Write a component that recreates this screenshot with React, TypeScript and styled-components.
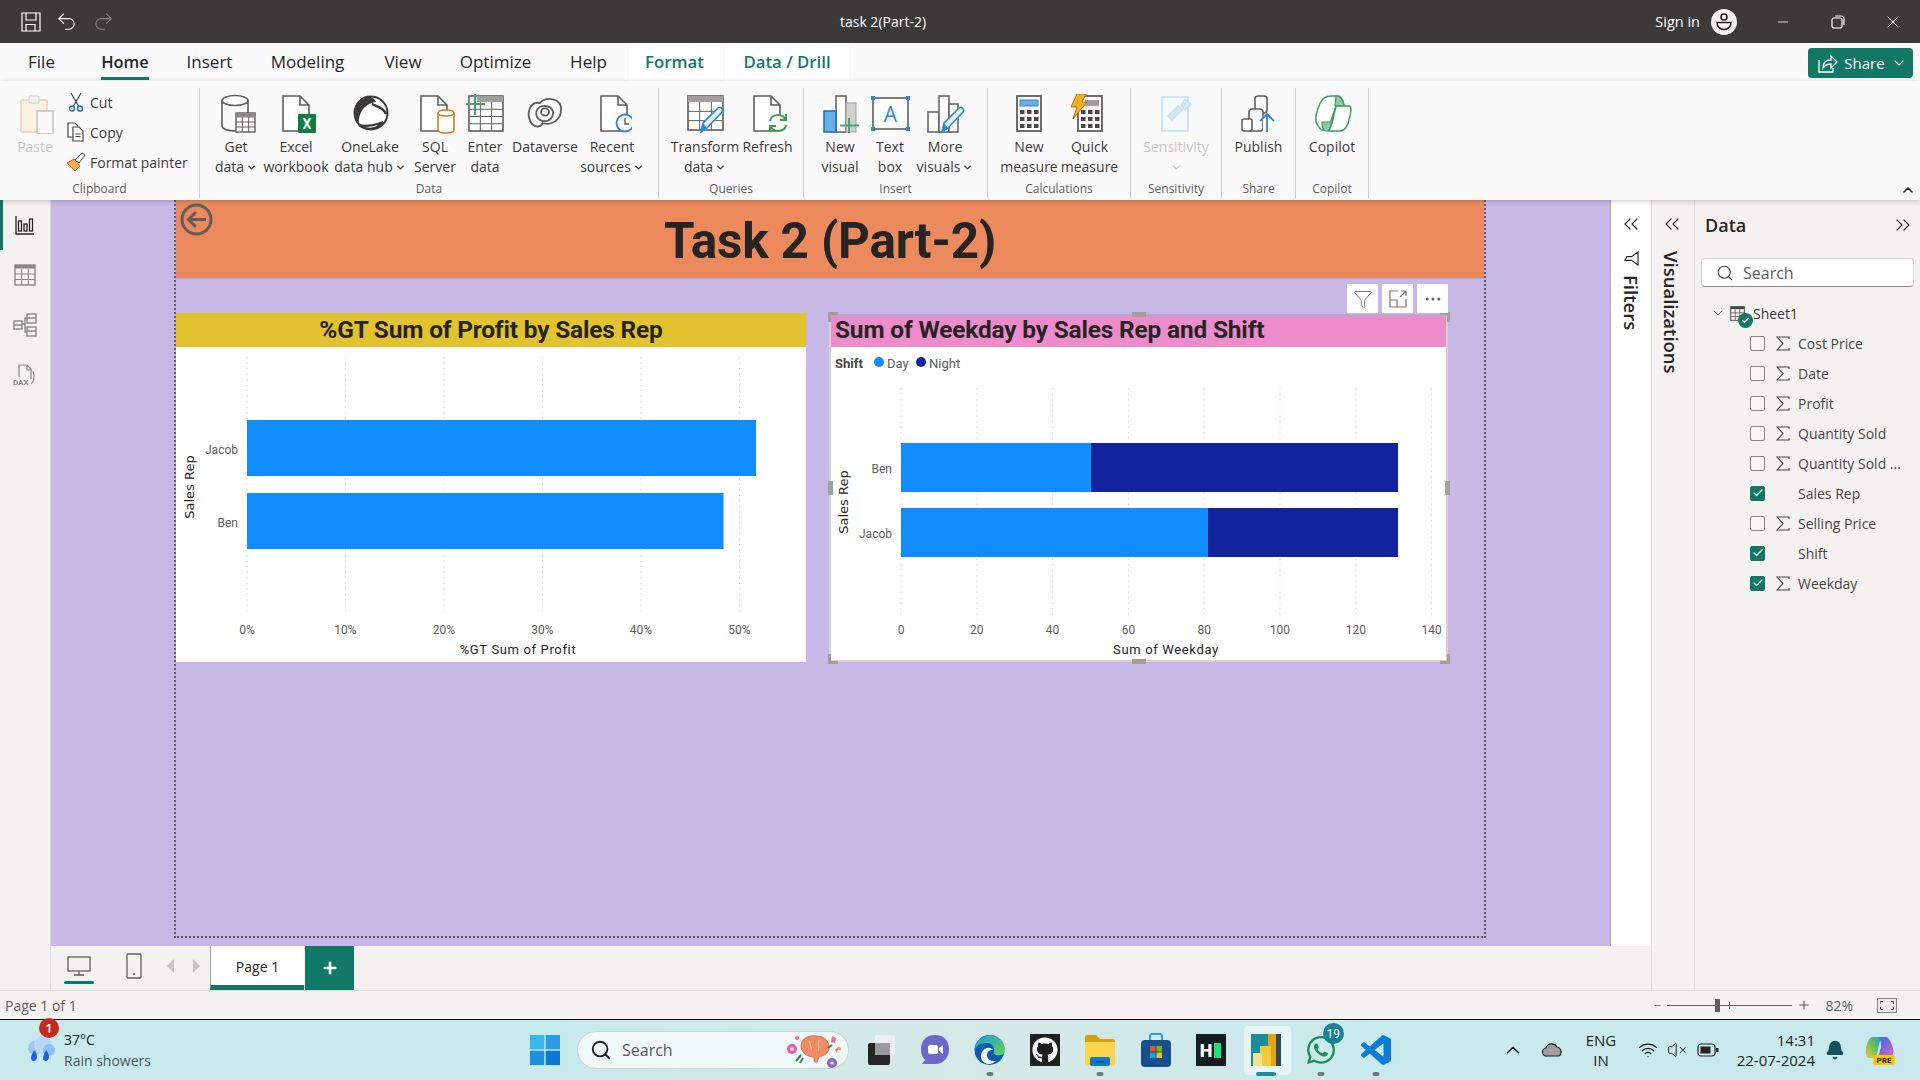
import React from "react";
import styled, { createGlobalStyle } from "styled-components";
import { Search as SearchIcon, Minus, X, Plus, ChevronDown, ChevronUp, ChevronsLeft, ChevronsRight, Check, Undo2, Redo2, Funnel, Ellipsis, Wifi, VolumeX, Bell } from "lucide-react";
import { FaGithub, FaWhatsapp } from "react-icons/fa";

const GlobalStyle = createGlobalStyle`
  html, body { margin: 0; padding: 0; background: #f3f2f1; }
  * { box-sizing: border-box; }
  body { font-family: "Open Sans", "Noto Sans", sans-serif; color: #252423; }
`;

const Shell = styled.div`width: 1920px; height: 1080px; display: flex; flex-direction: column; overflow: hidden;`;

/* Title bar */
const TitleBar = styled.header`height: 43px; background: #3b3a39; display: flex; align-items: center; color: #fff; flex: none;`;
const QuickAccess = styled.div`width: 838px; display: flex; align-items: center; gap: 14px; padding-left: 21px;`;
const DocTitle = styled.div`font-size: 14px; width: 90px; white-space: nowrap; text-align: center;`;
const TitleRight = styled.div`margin-left: auto; display: flex; align-items: center;`;
const SignIn = styled.span`font-size: 14.5px; margin-right: 11px;`;
const Avatar = styled.div`width: 26px; height: 26px; border-radius: 50%; background: #f3f2f1; margin-right: 18px; display: flex; align-items: center; justify-content: center;`;
const WinButton = styled.div`width: 55px; height: 43px; display: flex; align-items: center; justify-content: center;`;

/* Tabs */
const TabRow = styled.nav`height: 38px; background: #fafafa; display: flex; flex: none; position: relative;`;
const Tab = styled.div<{ $w: number; $ctx?: boolean; $active?: boolean }>`
  width: ${(p) => p.$w}px; display: flex; align-items: center; justify-content: center; padding-bottom: 2px;
  font-size: ${(p) => (p.$ctx ? 16.8 : p.$active ? 16.5 : 17)}px;
  color: ${(p) => (p.$ctx ? "#117865" : "#252423")}; font-weight: ${(p) => (p.$ctx || p.$active ? 600 : 400)};
  background: ${(p) => (p.$ctx ? "#fff" : "transparent")}; margin-right: ${(p) => (p.$ctx ? 5 : 0)}px;
`;
const ActiveText = styled.span`position: relative; &::after { content: ""; position: absolute; left: 0; right: 0; bottom: -7px; height: 3px; background: #117865; }`;
const ShareButton = styled.button`
  margin: 5px 7px 3px auto; width: 105px; height: 30px; background: #117865; color: #fff; border: 0; border-radius: 4px; font: 15px "Open Sans", sans-serif;
  display: flex; align-items: center; justify-content: center; gap: 6px; padding: 0 0 0 4px;
`;

/* Ribbon */
const Ribbon = styled.section`height: 119px; background: #fafafa; display: flex; flex: none; padding-top: 7px; position: relative; z-index: 3; box-shadow: 0 1px 5px rgba(0,0,0,.22);`;
const Group = styled.div<{ $w: number; $pad?: number }>`
  width: ${(p) => p.$w}px; height: 110px; border-right: 1px solid #d2d0ce; display: flex; flex-direction: column; padding-left: ${(p) => p.$pad ?? 0}px; flex: none;
`;
const GroupItems = styled.div`height: 95px; display: flex; padding-top: 6px;`;
const GroupLabel = styled.div<{ $pad?: number }>`font-size: 12px; color: #605e5c; text-align: center; line-height: 18px; margin: 2px 0 0 ${(p) => -(p.$pad ?? 0)}px;`;
const BigButton = styled.div<{ $w: number; $off?: boolean }>`
  width: ${(p) => p.$w}px; flex: none; display: flex; flex-direction: column; align-items: center; font-size: 14px; line-height: 20px; white-space: nowrap;
  color: ${(p) => (p.$off ? "#c8c6c4" : "#3b3a39")};
`;
const IconBox = styled.div`width: 40px; height: 40px; margin-bottom: 3px; flex: none;`;
const Line = styled.span`display: flex; align-items: center; justify-content: center; gap: 2px; height: 20px;`;
const SmallStack = styled.div`display: flex; flex-direction: column; margin: -8px 0 0 11px; padding-top: 1px;`;
const SmallRow = styled.div`height: 30px; display: flex; align-items: center; gap: 4px; font-size: 14px; color: #3b3a39; white-space: nowrap;`;
const SmallIcon = styled.span`width: 20px; height: 20px; display: flex; align-items: center; justify-content: center; flex: none;`;
const Collapse = styled.div`position: absolute; right: 4px; bottom: 2px; color: #252423; display: flex;`;

/* Main */
const Main = styled.main`flex: 1; display: flex; min-height: 0;`;
const Sidebar = styled.aside`width: 51px; flex: none; background: #f3f2f1; border-right: 1px solid #e1dfdd; display: flex; flex-direction: column; align-items: center; position: relative;`;
const SideSlot = styled.div`height: 50px; display: flex; align-items: center; justify-content: center; flex: none;`;
const SideMark = styled.div`position: absolute; left: 0; top: 0; width: 3px; height: 50px; background: #117865;`;
const CenterCol = styled.div`width: 1601px; flex: none; display: flex; flex-direction: column; border-right: 1px solid #e1dfdd;`;
const CanvasRow = styled.div`flex: 1; display: flex; min-height: 0;`;
const Canvas = styled.div`width: 1560px; flex: none; background: #c8b8e6; padding-left: 123px; border-right: 1px solid #b3b0ad;`;
const Page = styled.div`width: 1312px; height: 738px; border: 2px dotted #5c5a6c; border-top: 0;`;
const PageHeader = styled.div`height: 78px; background: #ec8a5e; position: relative; display: flex; align-items: center; justify-content: center; box-shadow: 0 1px 1px rgba(0,0,0,.08);`;
const PageTitle = styled.h1`margin: 0; font: 700 49.5px Roboto, sans-serif; color: #252423; letter-spacing: -0.2px; padding-top: 3px;`;
const BackButton = styled.div`position: absolute; left: 4px; top: 3px; width: 33px; height: 33px;`;
const ChartsRow = styled.div`display: flex; align-items: flex-start; padding-top: 35px;`;
const ChartCard = styled.div<{ $w: number; $gap?: number; $top?: number }>`
  width: ${(p) => p.$w}px; flex: none; margin-left: ${(p) => p.$gap ?? 0}px; margin-top: ${(p) => p.$top ?? 0}px; background: #fff; position: relative;
`;
const ChartTitle = styled.div<{ $bg: string; $h: number; $left?: boolean }>`
  height: ${(p) => p.$h}px; background: ${(p) => p.$bg}; font: 700 24.4px Roboto, sans-serif; color: #252423; display: flex; align-items: center;
  justify-content: ${(p) => (p.$left ? "flex-start" : "center")}; padding-left: ${(p) => (p.$left ? 5 : 0)}px; padding-bottom: ${(p) => (p.$left ? 3 : 1)}px; white-space: nowrap; letter-spacing: -0.15px;
`;
const ChartSvg = styled.svg`display: block;`;
const AxisTick = styled.text`font: 12px Roboto, sans-serif; fill: #605e5c;`;
const AxisTitle = styled.text`font: 400 13px Roboto, sans-serif; letter-spacing: .65px; fill: #252423;`;
const SideTitle = styled.text`font: 13px "DejaVu Sans", sans-serif; fill: #252423;`;
const LegendHead = styled.text`font: 700 13px Roboto, sans-serif; fill: #484644;`;
const LegendText = styled.text`font: 13px Roboto, sans-serif; fill: #605e5c;`;
const SelectFrame = styled.div`position: absolute; inset: -1px; border: 2px solid #d4d2d0; border-top-color: #b5a9cf; pointer-events: none;`;
const Handle = styled.div<{ $x: string; $y: string; $w: number; $h: number }>`
  position: absolute; background: #a19f9d; width: ${(p) => p.$w}px; height: ${(p) => p.$h}px;
  ${(p) => p.$x}; ${(p) => p.$y};
`;
const Corner = styled.div<{ $pos: string; $edges: string }>`
  position: absolute; width: 10px; height: 10px; ${(p) => p.$pos}; ${(p) => p.$edges};
`;
const VisualBar = styled.div`position: absolute; right: -1px; top: -31px; display: flex; gap: 4px;`;
const VisualBtn = styled.div`width: 31px; height: 29px; background: #fff; display: flex; align-items: center; justify-content: center; color: #777;`;

/* Right panes */
const FiltersPane = styled.div`width: 40px; flex: none; background: #fff; display: flex; flex-direction: column; align-items: center; padding-top: 12px; color: #252423;`;
const VisPane = styled.div`width: 43px; flex: none; background: #f3f2f1; border-right: 1px solid #e1dfdd; display: flex; flex-direction: column; align-items: center; padding: 12px 3px 0 0; color: #252423;`;
const VerticalLabel = styled.div<{ $top?: number }>`writing-mode: vertical-rl; font-size: 18.5px; font-weight: 600; white-space: nowrap; margin-top: ${(p) => p.$top ?? 0}px;`;
const FunnelMark = styled.svg`margin: 15px 0 9px; transform: rotate(90deg);`;
const DataPane = styled.div`flex: 1; background: #f3f2f1; padding: 13px 0 0 6px; position: relative;`;
const DataHead = styled.div`display: flex; justify-content: space-between; align-items: center; padding: 0 5px 0 4px; height: 24px; font-size: 18px; font-weight: 600; color: #252423;`;
const SearchBox = styled.div`margin-top: 21px; width: 213px; height: 29px; background: #fff; border: 1px solid #d6d4d2; border-bottom-color: #8a8886; border-radius: 4px; display: flex; align-items: center; gap: 9px; padding-left: 14px; font-size: 16px; color: #605e5c;`;
const TreeHead = styled.div`margin: 12px 0 1px; height: 28px; display: flex; align-items: center; padding-left: 9px; font-size: 14px; color: #3b3a39; position: relative;`;
const TreeIcon = styled.span`margin: 0 8px 0 4px; display: flex;`;
const SheetBadge = styled.div`position: absolute; left: 37px; top: 14px; width: 15px; height: 15px; border-radius: 50%; background: #117865; display: flex; align-items: center; justify-content: center; color: #fff;`;
const FieldRow = styled.div`height: 30px; display: flex; align-items: center; padding-left: 49px; font-size: 14px; color: #484644; white-space: nowrap;`;
const Box = styled.div<{ $on?: boolean }>`
  width: 15px; height: 15px; border-radius: 2px; flex: none; border: 1px solid ${(p) => (p.$on ? "#117865" : "#8a8886")};
  background: ${(p) => (p.$on ? "#117865" : "#f7f6f5")}; color: #fff; display: flex; align-items: center; justify-content: center;
`;
const SigmaSlot = styled.span`width: 33px; flex: none; padding-left: 11px; display: flex; align-items: center;`;

/* Page tabs */
const PageBar = styled.div`height: 44px; flex: none; background: #f3f2f1; display: flex; align-items: stretch; position: relative;`;
const ViewBtn = styled.div<{ $w: number; $sel?: boolean }>`
  width: ${(p) => p.$w}px; flex: none; display: flex; align-items: center; justify-content: center; position: relative; padding-bottom: 4px;
  ${(p) => p.$sel && `&::after { content: ""; position: absolute; left: 13px; right: 12px; bottom: 6px; height: 3px; border-radius: 2px; background: #117865; }`}
`;
const PageTab = styled.div`width: 94px; background: #fff; border-left: 1px solid #a19f9d; border-bottom: 5px solid #117865; display: flex; align-items: center; justify-content: center; font-size: 14px; font-weight: 500; color: #252423; padding-top: 2px;`;
const AddPage = styled.div`width: 49px; margin-left: 1px; background: #117865; color: #fff; display: flex; align-items: center; justify-content: center;`;

/* Status */
const StatusBar = styled.div`height: 30px; flex: none; background: #f3f2f1; border-top: 1px solid #e1dfdd; border-bottom: 1px solid #111; display: flex; align-items: center; padding-left: 5px; font-size: 14px; color: #605e5c; position: relative;`;
const ZoomArea = styled.div`margin-left: auto; display: flex; align-items: center; color: #605e5c;`;
const SliderTrack = styled.div`width: 125px; height: 1px; background: #605e5c; position: relative; margin: 0 5px 0 5px;`;
const SliderThumb = styled.div`position: absolute; left: 48px; top: -6px; width: 5px; height: 13px; background: #605e5c;`;
const SliderTick = styled.div`position: absolute; left: 62px; top: -3px; width: 1px; height: 7px; background: #605e5c;`;
const ZoomPct = styled.span`margin: 0 24px 0 14px; font-size: 14px;`;
const FitBtn = styled.div`width: 20px; height: 15px; border: 1px solid #8a8886; margin-right: 23px; display: flex; align-items: center; justify-content: center; background: #ecebea;`;

/* Taskbar */
const Taskbar = styled.footer`height: 60px; flex: none; background: linear-gradient(90deg, #c8eaed 0%, #c8eaed 28%, #d6e8e8 50%, #c8eaed 72%); display: flex; align-items: center; position: relative;`;
const Weather = styled.div`width: 530px; flex: none; display: flex; align-items: center; padding-left: 24px; position: relative;`;
const WeatherBadge = styled.div`position: absolute; left: 39px; top: -11px; width: 20px; height: 20px; border-radius: 50%; background: #c42b1c; color: #fff; font-size: 13px; font-weight: 600; display: flex; align-items: center; justify-content: center;`;
const WeatherText = styled.div`margin-left: 8px; font-size: 14px; line-height: 21px; color: #1f1f1f;`;
const WeatherSub = styled.div`color: #4b5a5c;`;
const TaskSearch = styled.div`margin-left: 17px; width: 272px; height: 38px; border-radius: 19px; background: #f1f8f8; border: 1px solid #c3d4d4; display: flex; align-items: center; padding-left: 12px; gap: 10px; font-size: 16px; color: #5a5a5a; position: relative;`;
const Doodle = styled.div`position: absolute; right: 6px; top: 1px;`;
const TaskIcons = styled.div`display: flex; margin-left: 3px;`;
const TaskSlot = styled.div<{ $active?: boolean }>`
  width: 55.2px; height: 60px; display: flex; align-items: center; justify-content: center; position: relative; flex: none;
  ${(p) => p.$active && `&::before { content: ""; position: absolute; left: 6px; right: 3px; top: 6px; bottom: 5px; background: rgba(255,255,255,.5); border-radius: 4px; }`}
  > svg { position: relative; }
`;
const GithubOverlay = styled.span`position: absolute; display: flex;`;
const RunDot = styled.div<{ $wide?: boolean }>`position: absolute; bottom: 4px; left: 50%; transform: translateX(-50%); width: ${(p) => (p.$wide ? 20 : 7)}px; height: 4px; border-radius: 2px; background: ${(p) => (p.$wide ? "#1c8ca0" : "#6f7a7a")};`;
const WaBadge = styled.div`position: absolute; right: 5px; top: 3px; width: 21px; height: 21px; border-radius: 50%; background: #178294; color: #fff; font: 12px Roboto, sans-serif; display: flex; align-items: center; justify-content: center;`;
const Tray = styled.div`margin-left: auto; display: flex; align-items: center; height: 100%; color: #1f1f1f; position: relative;`;
const TrayBox = styled.div<{ $w: number }>`width: ${(p) => p.$w}px; display: flex; align-items: center; justify-content: center; flex: none;`;
const LangBlock = styled.div`font-size: 15px; line-height: 20px; text-align: center;`;
const Clock = styled.div`width: 95px; text-align: right; font-size: 15px; line-height: 20px; white-space: nowrap;`;
const TrayEnd = styled.span`width: 16px;`;

const chev = <ChevronDown size={11} strokeWidth={3} />;

const G = "#605e5c";
const Doc = ({ x = 8, w = 26, stroke = G }: { x?: number; w?: number; stroke?: string }) => (
  <path d={`M${x} 2H${x + w - 9}L${x + w} 11V37H${x}Z M${x + w - 9} 2V11H${x + w}`} fill="#fff" stroke={stroke} strokeWidth="1.6" />
);
const Svg = ({ children }: { children: React.ReactNode }) => (
  <svg width="40" height="40" viewBox="0 0 40 40" fill="none">{children}</svg>
);
const Cells = ({ x, y, w, h, nx, ny, stroke = G }: { x: number; y: number; w: number; h: number; nx: number; ny: number; stroke?: string }) => (
  <g stroke={stroke} strokeWidth="1">
    {Array.from({ length: nx - 1 }, (_, i) => <line key={`a${i}`} x1={x + (w * (i + 1)) / nx} x2={x + (w * (i + 1)) / nx} y1={y} y2={y + h} />)}
    {Array.from({ length: ny - 1 }, (_, i) => <line key={`b${i}`} y1={y + (h * (i + 1)) / ny} y2={y + (h * (i + 1)) / ny} x1={x} x2={x + w} />)}
  </g>
);
const Pencil = ({ dx = 0, dy = 0 }: { dx?: number; dy?: number }) => (
  <g transform={`translate(${dx} ${dy})`}>
    <path d="M16 37l2-9L33 13c2-2 6 1 4 4L22 33z" fill="#e3effa" stroke="#2b88d8" strokeWidth="1.6" />
    <path d="M16 37l2-9 4 5z" fill="#2b88d8" />
  </g>
);
const IconGetData = () => <Svg><ellipse cx="19" cy="6.5" rx="13" ry="5" stroke={G} strokeWidth="1.6" fill="#fff" /><path d="M6 6.5V32c0 3 6 5 14 5M32 7v12" stroke={G} strokeWidth="1.6" /><rect x="20" y="19" width="19" height="19" fill="#fff" stroke={G} strokeWidth="1.4" /><rect x="20" y="19" width="19" height="4.5" fill="#8a8886" /><Cells x={20} y={23} w={19} h={15} nx={3} ny={3} /></Svg>;
const IconExcel = () => <Svg><Doc x={7} /><rect x="22" y="20" width="18" height="19" rx="1" fill="#107c41" /><text x="31" y="35" textAnchor="middle" fontFamily="Roboto" fontWeight="700" fontSize="14" fill="#fff">X</text></Svg>;
const IconOneLake = () => <Svg><circle cx="21" cy="19" r="16.5" fill="#fff" stroke="#3b3a39" strokeWidth="2" /><path d="M17 2C6 4 1 20 9 31 8 22 12 10 26 8 24 4 21 2 17 2z" fill="#3b3a39" /><path d="M9 31c8 6 17 5 24-3-8 3-18 5-24 3zM22 10c6 3 12 4 14 10" stroke="#3b3a39" strokeWidth="2.4" /></Svg>;
const IconSql = () => <Svg><Doc x={6} /><path d="M23 19c0-4 16-4 16 0v17c0 4-16 4-16 0z" fill="#fff" stroke="#d97a1e" strokeWidth="1.6" /><path d="M23 19c0 4 16 4 16 0" stroke="#d97a1e" strokeWidth="1.6" /></Svg>;
const IconEnter = () => <Svg><rect x="4" y="2" width="34" height="35" fill="#fff" stroke={G} strokeWidth="1.6" /><rect x="12" y="2" width="26" height="6" fill="#a19f9d" /><Cells x={4} y={8} w={34} h={29} nx={3} ny={4} /><path d="M10 0v21M1 10h19" stroke="#4ca26d" strokeWidth="2.2" /></Svg>;
const IconDataverse = () => <Svg><path d="M7 30C0 20 5 7 15 9c5-7 22-5 21 7 0 10-10 16-18 13-3 5-8 4-11 1z" stroke={G} strokeWidth="1.8" /><path d="M12 23C9 16 15 11 20 12c6 0 10 5 7 11-3 5-11 6-15 0z" stroke={G} strokeWidth="1.8" /><ellipse cx="20" cy="18" rx="4" ry="3.6" stroke={G} strokeWidth="1.8" /></Svg>;
const IconRecent = () => <Svg><Doc x={9} /><circle cx="33" cy="29" r="8.5" fill="#fff" stroke="#2b88d8" strokeWidth="1.8" /><path d="M33 24v6h4" stroke={G} strokeWidth="1.4" /></Svg>;
const IconTransform = () => <Svg><rect x="3" y="2" width="35" height="34" fill="#fff" stroke={G} strokeWidth="1.6" /><rect x="3" y="2" width="35" height="6" fill="#a19f9d" /><Cells x={3} y={8} w={35} h={28} nx={3} ny={3} /><Pencil dx={0} dy={1} /></Svg>;
const IconRefresh = () => <Svg><Doc x={6} /><circle cx="30" cy="29" r="9" fill="#fff" /><path d="M22 27c1-7 12-8 15-2M38 31c-1 7-12 8-15 2" stroke="#3c9a5f" strokeWidth="2" /><path d="M38 20v6h-6M22 38v-6h6" stroke="#3c9a5f" strokeWidth="2" /></Svg>;
const IconNewVisual = () => <Svg><rect x="16" y="2" width="10" height="36" fill="#fff" stroke={G} strokeWidth="1.5" /><rect x="26" y="9" width="10" height="29" fill="#d2d0ce" stroke="#a19f9d" /><rect x="4" y="17" width="12" height="21" fill="#69afe5" stroke="#1a6fb5" strokeWidth="1.5" /><path d="M29 24v15M20 31.5h19" stroke="#4ca26d" strokeWidth="2" /></Svg>;
const IconTextBox = () => <Svg><rect x="3" y="4" width="35" height="31" fill="#fff" stroke={G} strokeWidth="1.6" />{[[3, 4], [38, 4], [3, 35], [38, 35]].map(([x, y]) => <rect key={`${x}${y}`} x={x - 2} y={y - 2} width="4" height="4" fill="#2b88d8" />)}<text x="20.5" y="28" textAnchor="middle" fontFamily="Open Sans" fontSize="21" fill="#2b88d8">A</text></Svg>;
const IconMoreVisuals = () => <Svg><rect x="3" y="18" width="11" height="20" fill="#fff" stroke={G} strokeWidth="1.5" /><rect x="14" y="2" width="10" height="36" fill="#fff" stroke={G} strokeWidth="1.5" /><rect x="24" y="10" width="9" height="28" fill="#fff" stroke={G} strokeWidth="1.5" /><Pencil dx={1} dy={1} /></Svg>;
const calcDots = (x: number, y: number) => [0, 1, 2].flatMap((r) => [0, 1, 2].map((c) => <rect key={`${r}${c}`} x={x + c * 7} y={y + r * 7} width="4.5" height="4" fill="#484644" />));
const IconCalc = () => <Svg><rect x="8" y="2" width="24" height="35" fill="#fff" stroke={G} strokeWidth="1.8" /><rect x="11" y="6" width="18" height="6" fill="#69afe5" stroke="#2b88d8" />{calcDots(11, 16)}</Svg>;
const IconQuick = () => <Svg><rect x="8" y="2" width="24" height="35" fill="#fff" stroke={G} strokeWidth="1.8" /><rect x="15" y="6" width="14" height="6" fill="#a19f9d" />{calcDots(11, 16)}<path d="M7 0h9l-4 8h5L3 25l4-12H1z" fill="#f7b01e" stroke="#c9650b" strokeWidth="1" /></Svg>;
const IconSens = () => <Svg><path d="M6 3H32V37H6z" fill="#f3f9fd" stroke="#c3dff2" strokeWidth="1.6" /><path d="M12 22L22 12l4 4-10 10z M25 12l4-7 6 5-6 6z" fill="#d5e8f6" stroke="#c3dff2" strokeWidth="1.4" /></Svg>;
const IconPublish = () => <Svg><rect x="16" y="2" width="12" height="17" rx="3" stroke={G} strokeWidth="1.6" /><rect x="10" y="15" width="14" height="22" rx="3" fill="#fafafa" stroke={G} strokeWidth="1.6" /><rect x="3" y="25" width="10" height="12" rx="2" fill="#fafafa" stroke={G} strokeWidth="1.6" /><rect x="24" y="22" width="10" height="15" fill="#fafafa" /><path d="M28 38V20M21 27l7-7 7 7" stroke="#2b88d8" strokeWidth="1.8" /></Svg>;
const IconCopilot = () => <Svg><path d="M20 2h6c3 0 5 4 6 9l-8 1-8 24H11c-3 0-5-4-6-6C1 24 8 8 11 5c2-2 5-3 9-3z" fill="#fff" stroke="#3c9a5f" strokeWidth="1.5" /><path d="M24 2c4 0 7 4 8 10H23z M10 28h10l-3 9h-3c-3 0-4-5-4-9z" fill="#8fcaa4" stroke="#3c9a5f" strokeWidth="1.2" /><path d="M24 12h13c3 0 2 8 0 14-1 5-4 11-9 11H17l3-8z" fill="#fff" stroke="#3c9a5f" strokeWidth="1.5" /></Svg>;

const PasteIcon = () => (
  <svg width="40" height="40" viewBox="0 0 40 40" fill="none"><rect x="6" y="6" width="26" height="32" rx="1" fill="#fbf2e3" stroke="#f1dcb9" strokeWidth="2" /><rect x="14" y="2" width="10" height="7" rx="1" fill="#f3f2f1" stroke="#d2d0ce" /><rect x="22" y="17" width="16" height="23" fill="#fafafa" stroke="#c8c6c4" strokeWidth="1.6" /></svg>
);
const CutIcon = () => <svg width="16" height="20" viewBox="0 0 16 20" fill="none"><path d="M3 1l7.5 13M13 1L5.5 14" stroke="#3b3a39" strokeWidth="1.2" /><circle cx="4" cy="16.5" r="2.5" stroke="#1a6fb5" strokeWidth="1.4" /><circle cx="12" cy="16.5" r="2.5" stroke="#1a6fb5" strokeWidth="1.4" /></svg>;
const CopyIcon = () => <svg width="18" height="20" viewBox="0 0 18 20" fill="none"><path d="M1 1H8L11 4V15H1Z" fill="#fff" stroke="#484644" strokeWidth="1.2" /><path d="M6 5H12L16 9V19H6Z" fill="#fff" stroke="#484644" strokeWidth="1.2" /><path d="M8.5 12h5M8.5 14.5h5" stroke="#484644" /></svg>;
const BrushIcon = () => <svg width="20" height="20" viewBox="0 0 20 20" fill="none"><path d="M1 11l7-4 6 7-5 5C7 17 5 15 1 11z" fill="#f3b04e" stroke="#c9650b" /><path d="M9 8l7-7 3 2-6 8z" fill="#fff" stroke="#484644" /></svg>;
const SigmaIcon = () => <svg width="14" height="15" viewBox="0 0 14 15" fill="none" stroke="#484644" strokeWidth="1.1"><path d="M13 3V1H1l6 6.5L1 14h12v-2" /></svg>;

const Grid = ({ color = "#8a8886", size = 22 }: { color?: string; size?: number }) => (
  <svg width={size} height={size} viewBox="0 0 22 22" fill="none"><rect x="1" y="1" width="20" height="20" stroke={color} strokeWidth="1.4" /><rect x="1" y="1" width="20" height="3.5" fill={color} /><Cells x={1} y={4.5} w={20} h={16.5} nx={3} ny={3} stroke={color} /></svg>
);

const Bars1 = [
  { name: "Jacob", y: 420, end: 756 },
  { name: "Ben", y: 493, end: 723.5 },
];
const Ticks1 = [0, 10, 20, 30, 40, 50];
const Ticks2 = [0, 20, 40, 60, 80, 100, 120, 140];
const gx1 = (v: number) => 247 + v * 9.85;
const gx2 = (v: number) => 901 + v * 3.79;

const Gridline = ({ x, y1, y2 }: { x: number; y1: number; y2: number }) => (
  <line x1={x} x2={x} y1={y1} y2={y2} stroke="#d6d6d6" strokeDasharray="1.5 4" />
);

const ChartOne = () => (
  <ChartSvg width="630" height="315" viewBox="176 347 630 315">
    {Ticks1.map((t) => <Gridline key={t} x={gx1(t)} y1={357} y2={615} />)}
    {Bars1.map((b) => (
      <g key={b.name}>
        <rect x={247} y={b.y} width={b.end - 247} height={56} fill="#118dff" />
        <AxisTick x={238} y={b.y + 34} textAnchor="end">{b.name}</AxisTick>
      </g>
    ))}
    {Ticks1.map((t) => <AxisTick key={t} x={gx1(t)} y={634} textAnchor="middle">{t}%</AxisTick>)}
    <AxisTitle x={518} y={654} textAnchor="middle">%GT Sum of Profit</AxisTitle>
    <SideTitle transform="translate(194 487) rotate(-90)" textAnchor="middle">Sales Rep</SideTitle>
  </ChartSvg>
);

const ChartTwo = () => (
  <ChartSvg width="617" height="314" viewBox="830 347 617 314">
    <LegendHead x={835} y={368}>Shift</LegendHead>
    <circle cx={879} cy={362} r={5} fill="#118dff" />
    <LegendText x={887} y={368}>Day</LegendText>
    <circle cx={921} cy={362} r={5} fill="#12239e" />
    <LegendText x={929} y={368}>Night</LegendText>
    {Ticks2.map((t) => <Gridline key={t} x={gx2(t)} y1={388} y2={620} />)}
    <rect x={901} y={443} width={190} height={49} fill="#118dff" />
    <rect x={1091} y={443} width={307} height={49} fill="#12239e" />
    <rect x={901} y={508} width={307} height={49} fill="#118dff" />
    <rect x={1208} y={508} width={190} height={49} fill="#12239e" />
    <AxisTick x={892} y={473} textAnchor="end">Ben</AxisTick>
    <AxisTick x={892} y={538} textAnchor="end">Jacob</AxisTick>
    {Ticks2.map((t) => <AxisTick key={t} x={gx2(t)} y={634} textAnchor="middle">{t}</AxisTick>)}
    <AxisTitle x={1166} y={654} textAnchor="middle">Sum of Weekday</AxisTitle>
    <SideTitle transform="translate(848 502) rotate(-90)" textAnchor="middle">Sales Rep</SideTitle>
  </ChartSvg>
);

const fields = [
  { n: "Cost Price", s: true }, { n: "Date", s: true }, { n: "Profit", s: true }, { n: "Quantity Sold", s: true }, { n: "Quantity Sold ...", s: true },
  { n: "Sales Rep", on: true }, { n: "Selling Price", s: true }, { n: "Shift", on: true }, { n: "Weekday", s: true, on: true },
];

const tabs: [string, number, boolean?, boolean?][] = [
  ["File", 83], ["Home", 84, false, true], ["Insert", 85], ["Modeling", 111], ["View", 80], ["Optimize", 105], ["Help", 81],
];

const Big = ({ w, icon, l1, l2, caret, off }: { w: number; icon: React.ReactNode; l1: string; l2?: string; caret?: boolean; off?: boolean }) => (
  <BigButton $w={w} $off={off}>
    <IconBox>{icon}</IconBox>
    <Line>{l1}</Line>
    {(l2 || caret) && <Line>{l2}{caret && chev}</Line>}
  </BigButton>
);

const Flowers = () => (
  <svg width="56" height="36" viewBox="0 0 56 36" fill="none">
    <path d="M15 13c0-8 9-11 15-10 9 0 14 6 13 13-1 5-6 7-10 8l-2 5c-3 1-3-2-3-5-7 0-13-5-13-11z" fill="#f28a64" stroke="#e5734d" />
    <path d="M23 8c2 2 1 7 3 9M33 7c-2 3 1 7-1 11" stroke="#ffc4ad" strokeWidth="1.2" />
    <circle cx="6" cy="16" r="5" fill="#d65bd0" /><circle cx="6" cy="16" r="2" fill="#f7e07a" />
    <circle cx="46" cy="30" r="5" fill="#8a63d9" /><circle cx="46" cy="30" r="1.8" fill="#f7e07a" />
    <path d="M46 3l4 2-1 5-4-1zM52 14l3 1-3 2-1 3-2-3z" fill="#ee6aa0" /><path d="M10 28l5-6M42 15l4-3M14 30l3-5" stroke="#2d8a5a" strokeWidth="2" />
    <circle cx="11" cy="5" r="2" fill="#ee6aa0" /><path d="M52 14l3 3" stroke="#e3b83a" strokeWidth="2" />
  </svg>
);

export default function App() {
  return (
    <Shell>
      <GlobalStyle />
      <TitleBar>
        <QuickAccess>
          <svg width="20" height="20" viewBox="0 0 20 20" fill="none" stroke="#fff" strokeWidth="1.2"><path d="M1 1H19V19H1Z" /><path d="M5 1V8H15V1M5 19V12.5H14V19" /></svg>
          <Undo2 size={23} color="#fff" strokeWidth={1.1} />
          <Redo2 size={23} color="#8a8886" strokeWidth={1.1} />
        </QuickAccess>
        <DocTitle>task 2(Part-2)</DocTitle>
        <TitleRight>
          <SignIn>Sign in</SignIn>
          <Avatar>
            <svg width="20" height="20" viewBox="0 0 20 20" fill="none" stroke="#252423" strokeWidth="1.6"><circle cx="10" cy="5" r="3" /><path d="M3 10.5h14c0 4-3 7-7 7s-7-3-7-7z" /></svg>
          </Avatar>
          <WinButton><Minus size={16} strokeWidth={1.2} /></WinButton>
          <WinButton><svg width="14" height="14" viewBox="0 0 14 14" fill="none" stroke="#fff" strokeWidth="1.2"><rect x="1" y="3" width="10" height="10" rx="2" /><path d="M4 1h6a3 3 0 0 1 3 3v6" /></svg></WinButton>
          <WinButton><X size={20} strokeWidth={1.2} /></WinButton>
        </TitleRight>
      </TitleBar>

      <TabRow>
        {tabs.map(([t, w, , active]) => (
          <Tab key={t} $w={w} $active={active}>{active ? <ActiveText>{t}</ActiveText> : t}</Tab>
        ))}
        <Tab $w={91} $ctx>Format</Tab>
        <Tab $w={124} $ctx>Data / Drill</Tab>
        <ShareButton>
          <svg width="20" height="20" viewBox="0 0 20 20" fill="none" stroke="#fff" strokeWidth="1.3"><path d="M1 7v12h14v-4" /><path d="M5 15c0-6 4-8 8-8V3l6 6-6 6v-4c-3 0-6 1-8 4z" /></svg>
          Share <ChevronDown size={16} strokeWidth={1.6} />
        </ShareButton>
      </TabRow>

      <Ribbon>
        <Group $w={200} $pad={15}>
          <GroupItems>
            <BigButton $w={40} $off><IconBox><PasteIcon /></IconBox><Line>Paste</Line></BigButton>
            <SmallStack>
              <SmallRow><SmallIcon><CutIcon /></SmallIcon> Cut</SmallRow>
              <SmallRow><SmallIcon><CopyIcon /></SmallIcon> Copy</SmallRow>
              <SmallRow><SmallIcon><BrushIcon /></SmallIcon> Format painter</SmallRow>
            </SmallStack>
          </GroupItems>
          <GroupLabel $pad={15}>Clipboard</GroupLabel>
        </Group>
        <Group $w={459} $pad={10}>
          <GroupItems>
            <Big w={52} icon={<IconGetData />} l1="Get" l2="data" caret />
            <Big w={68} icon={<IconExcel />} l1="Excel" l2="workbook" />
            <Big w={80} icon={<IconOneLake />} l1="OneLake" l2="data hub" caret />
            <Big w={50} icon={<IconSql />} l1="SQL" l2="Server" />
            <Big w={50} icon={<IconEnter />} l1="Enter" l2="data" />
            <Big w={70} icon={<IconDataverse />} l1="Dataverse" />
            <Big w={64} icon={<IconRecent />} l1="Recent" l2="sources" caret />
          </GroupItems>
          <GroupLabel $pad={10}>Data</GroupLabel>
        </Group>
        <Group $w={145} $pad={11}>
          <GroupItems>
            <Big w={70} icon={<IconTransform />} l1="Transform" l2="data" caret />
            <Big w={55} icon={<IconRefresh />} l1="Refresh" />
          </GroupItems>
          <GroupLabel $pad={11}>Queries</GroupLabel>
        </Group>
        <Group $w={184} $pad={11}>
          <GroupItems>
            <Big w={50} icon={<IconNewVisual />} l1="New" l2="visual" />
            <Big w={50} icon={<IconTextBox />} l1="Text" l2="box" />
            <Big w={60} icon={<IconMoreVisuals />} l1="More" l2="visuals" caret />
          </GroupItems>
          <GroupLabel $pad={11}>Insert</GroupLabel>
        </Group>
        <Group $w={143} $pad={11}>
          <GroupItems>
            <Big w={60} icon={<IconCalc />} l1="New" l2="measure" />
            <Big w={61} icon={<IconQuick />} l1="Quick" l2="measure" />
          </GroupItems>
          <GroupLabel $pad={11}>Calculations</GroupLabel>
        </Group>
        <Group $w={91}>
          <GroupItems>
            <Big w={90} icon={<IconSens />} l1="Sensitivity" caret off />
          </GroupItems>
          <GroupLabel>Sensitivity</GroupLabel>
        </Group>
        <Group $w={74}>
          <GroupItems><Big w={73} icon={<IconPublish />} l1="Publish" /></GroupItems>
          <GroupLabel>Share</GroupLabel>
        </Group>
        <Group $w={73}>
          <GroupItems><Big w={72} icon={<IconCopilot />} l1="Copilot" /></GroupItems>
          <GroupLabel>Copilot</GroupLabel>
        </Group>
        <Collapse><ChevronUp size={16} strokeWidth={2.4} /></Collapse>
      </Ribbon>

      <Main>
        <Sidebar>
          <SideMark />
          <SideSlot><svg width="20" height="20" viewBox="0 0 20 20" fill="none" stroke="#252423" strokeWidth="1.3"><path d="M1 1v18h18" /><rect x="3.5" y="6" width="3" height="10" /><rect x="9" y="9" width="3" height="7" /><rect x="14.5" y="4" width="3" height="12" /></svg></SideSlot>
          <SideSlot><Grid /></SideSlot>
          <SideSlot><svg width="24" height="24" viewBox="0 0 24 24" fill="none" stroke="#8a8886" strokeWidth="1.4"><rect x="1" y="8" width="8" height="8" /><rect x="14" y="1" width="9" height="9" /><rect x="14" y="14" width="9" height="9" /><path d="M9 11h3V5h2M12 11v8h2M14 5h9M14 18h9M1 12h8" /></svg></SideSlot>
          <SideSlot><svg width="24" height="24" viewBox="0 0 24 24" fill="none" stroke="#8a8886" strokeWidth="1.2"><path d="M6 14V2h8l4 4v10" /><path d="M14 2v5h5M20 8c2 5 1 11-2 13" /><text x="0" y="22" fontFamily="Roboto" fontSize="8" fontWeight="700" fill="#8a8886" stroke="none">DAX</text></svg></SideSlot>
        </Sidebar>

        <CenterCol>
          <CanvasRow>
            <Canvas>
              <Page>
                <PageHeader>
                  <BackButton>
                    <svg width="33" height="33" viewBox="0 0 33 33" fill="none" stroke="#605e5c" strokeWidth="3"><circle cx="16.5" cy="16.5" r="14.5" /><path d="M26 16.5H9M16 9l-7.5 7.5L16 24" /></svg>
                  </BackButton>
                  <PageTitle>Task 2 (Part-2)</PageTitle>
                </PageHeader>
                <ChartsRow>
                  <ChartCard $w={630}>
                    <ChartTitle $bg="#e2c22e" $h={34}>%GT Sum of Profit by Sales Rep</ChartTitle>
                    <ChartOne />
                  </ChartCard>
                  <ChartCard $w={617} $gap={24} $top={2}>
                    <ChartTitle $bg="#ee8ccb" $h={32} $left>Sum of Weekday by Sales Rep and Shift</ChartTitle>
                    <ChartTwo />
                    <SelectFrame />
                    <Handle $x="left: 50%; margin-left: -7px" $y="top: -3px" $w={14} $h={5} />
                    <Handle $x="left: 50%; margin-left: -7px" $y="bottom: -3px" $w={14} $h={5} />
                    <Handle $x="left: -2px" $y="top: 50%; margin-top: -7px" $w={5} $h={14} />
                    <Handle $x="right: -3px" $y="top: 50%; margin-top: -7px" $w={5} $h={14} />
                    <Corner $pos="left: -2px; top: -3px" $edges="border-left: 3px solid #a19f9d; border-top: 3px solid #a19f9d" />
                    <Corner $pos="right: -3px; top: -3px" $edges="border-right: 3px solid #a19f9d; border-top: 3px solid #a19f9d" />
                    <Corner $pos="left: -2px; bottom: -3px" $edges="border-left: 3px solid #a19f9d; border-bottom: 3px solid #a19f9d" />
                    <Corner $pos="right: -3px; bottom: -3px" $edges="border-right: 3px solid #a19f9d; border-bottom: 3px solid #a19f9d" />
                    <VisualBar>
                      <VisualBtn><Funnel size={20} strokeWidth={1.2} /></VisualBtn>
                      <VisualBtn>
                        <svg width="18" height="18" viewBox="0 0 18 18" fill="none" stroke="#777" strokeWidth="1.2"><path d="M9 1H1V17H17V9M1 10H8V17M11 7l6-6M12 1h5v5" /></svg>
                      </VisualBtn>
                      <VisualBtn><Ellipsis size={20} strokeWidth={1.6} color="#605e5c" /></VisualBtn>
                    </VisualBar>
                  </ChartCard>
                </ChartsRow>
              </Page>
            </Canvas>
            <FiltersPane>
              <ChevronsLeft size={24} strokeWidth={1.2} />
              <FunnelMark width="15" height="15" viewBox="0 0 16 16" fill="none" stroke="#252423" strokeWidth="1.2"><path d="M1 1h14L10 8v7l-4-2V8z" /></FunnelMark>
              <VerticalLabel>Filters</VerticalLabel>
            </FiltersPane>
          </CanvasRow>
          <PageBar>
            <ViewBtn $w={55} $sel>
              <svg width="24" height="20" viewBox="0 0 24 20" fill="none" stroke="#605e5c" strokeWidth="1.3"><rect x="1" y="1" width="22" height="14" /><path d="M12 15v4M7 19h10" /></svg>
            </ViewBtn>
            <ViewBtn $w={55}>
              <svg width="16" height="26" viewBox="0 0 16 26" fill="none" stroke="#605e5c" strokeWidth="1.3"><rect x="1" y="1" width="14" height="24" rx="1" /><path d="M7 21h2" /></svg>
            </ViewBtn>
            <ViewBtn $w={20}><svg width="8" height="14" viewBox="0 0 8 14"><path d="M7 0v14L0 7z" fill="#c8c6c4" /></svg></ViewBtn>
            <ViewBtn $w={29}><svg width="8" height="14" viewBox="0 0 8 14"><path d="M1 0v14l7-7z" fill="#c8c6c4" /></svg></ViewBtn>
            <PageTab>Page 1</PageTab>
            <AddPage><Plus size={18} strokeWidth={3.5} /></AddPage>
          </PageBar>
        </CenterCol>

        <VisPane>
          <ChevronsLeft size={24} strokeWidth={1.2} />
          <VerticalLabel $top={15}>Visualizations</VerticalLabel>
        </VisPane>

        <DataPane>
          <DataHead>Data <ChevronsRight size={24} strokeWidth={1.2} /></DataHead>
          <SearchBox><SearchIcon size={18} strokeWidth={1.5} color="#484644" />Search</SearchBox>
          <TreeHead>
            <ChevronDown size={16} strokeWidth={1} />
            <TreeIcon><Grid color="#484644" size={15} /></TreeIcon>
            Sheet1
            <SheetBadge><Check size={9} strokeWidth={3.5} /></SheetBadge>
          </TreeHead>
          {fields.map((f) => (
            <FieldRow key={f.n}>
              <Box $on={f.on}>{f.on && <Check size={12} strokeWidth={2.5} />}</Box>
              <SigmaSlot>{f.s ? <SigmaIcon /> : null}</SigmaSlot>
              {f.n}
            </FieldRow>
          ))}
        </DataPane>
      </Main>

      <StatusBar>
        Page 1 of 1
        <ZoomArea>
          <Minus size={9} strokeWidth={2} />
          <SliderTrack><SliderThumb /><SliderTick /></SliderTrack>
          <Plus size={14} strokeWidth={1.8} />
          <ZoomPct>82%</ZoomPct>
          <FitBtn><svg width="14" height="9" viewBox="0 0 14 9" fill="none" stroke="#484644"><path d="M0 3V.5h3M11 .5h2.5V3M13.5 6v2.5H11M3 8.5H.5V6" /></svg></FitBtn>
        </ZoomArea>
      </StatusBar>

      <Taskbar>
        <Weather>
          <svg width="32" height="28" viewBox="0 0 32 28"><circle cx="11" cy="12" r="7" fill="#9cc7f5" /><circle cx="19" cy="9" r="9" fill="#b8d8fa" /><circle cx="25" cy="14" r="6" fill="#8cbcf2" /><path d="M10 14c3 4 4 7 2 10-2 2-5 1-5-2 0-3 2-5 3-8zM22 14c3 4 4 7 2 10-2 2-5 1-5-2 0-3 2-5 3-8z" fill="#1e5fe0" /></svg>
          <WeatherBadge>1</WeatherBadge>
          <WeatherText>37°C<WeatherSub>Rain showers</WeatherSub></WeatherText>
        </Weather>
        <svg width="30" height="30" viewBox="0 0 30 30"><rect x="0" y="0" width="14.3" height="14.3" fill="#3ab5ee" /><rect x="15.7" y="0" width="14.3" height="14.3" fill="#2b9de6" /><rect x="0" y="15.7" width="14.3" height="14.3" fill="#1d8fe0" /><rect x="15.7" y="15.7" width="14.3" height="14.3" fill="#0c78d6" /></svg>
        <TaskSearch>
          <SearchIcon size={22} strokeWidth={2} color="#1f1f1f" />
          Search
          <Doodle><Flowers /></Doodle>
        </TaskSearch>
        <TaskIcons>
          <TaskSlot><svg width="30" height="32" viewBox="0 0 30 32"><rect x="3" y="9" width="22" height="22" rx="2" fill="#252525" /><rect x="10" y="1" width="20" height="20" rx="1" fill="#f1f1f1" fillOpacity=".85" /><rect x="10" y="9" width="15" height="12" fill="#9b9b9b" /></svg></TaskSlot>
          <TaskSlot><svg width="30" height="32" viewBox="0 0 30 32"><path d="M15 1c9 0 14 6 14 14s-5 15-14 15H2l3-4C2 23 1 19 1 15 1 7 6 1 15 1z" fill="#6a68c8" /><rect x="8" y="11" width="10" height="9" rx="2" fill="#fff" /><path d="M19 14l4-3v9l-4-3z" fill="#fff" /></svg></TaskSlot>
          <TaskSlot>
            <svg width="31" height="32" viewBox="0 0 31 32">
              <defs><linearGradient id="edgeA" x1="0" y1="0" x2="1" y2="1"><stop offset="0" stopColor="#1c9bdc" /><stop offset="1" stopColor="#63d35a" /></linearGradient></defs>
              <circle cx="15.5" cy="16" r="15" fill="#0a5cab" />
              <path d="M1 15C2 6 9 1 16 1c9 0 15 7 15 15 0 5-5 6-9 5-3-1-2-3-2-5 0-5-3-7-7-7-6 0-9 2-12 6z" fill="url(#edgeA)" />
              <path d="M8 18c2-4 8-6 11-2-4 0-6 2-6 5 0 4 4 7 9 6-3 3-8 4-11 2-4-2-5-7-3-11z" fill="#f3fbfb" />
            </svg>
            <RunDot />
          </TaskSlot>
          <TaskSlot><svg width="30" height="32" viewBox="0 0 30 32"><rect width="30" height="32" fill="#1f1f1f" /></svg><GithubOverlay><FaGithub size={26} color="#fff" /></GithubOverlay></TaskSlot>
          <TaskSlot><svg width="30" height="32" viewBox="0 0 30 32"><path d="M0 3a2 2 0 0 1 2-2h9l4 4h13a2 2 0 0 1 2 2v4H0z" fill="#d9a009" /><rect y="8" width="30" height="24" rx="1" fill="#fbd44f" /><rect x="5" y="23" width="20" height="9" rx="2" fill="#0f78c8" /><rect x="11" y="27" width="8" height="1.5" fill="#0b4f8a" /></svg><RunDot /></TaskSlot>
          <TaskSlot><svg width="30" height="34" viewBox="0 0 30 34"><path d="M9 7V3a2 2 0 0 1 2-2h8a2 2 0 0 1 2 2v4" stroke="#2a9ee0" strokeWidth="2" fill="none" /><rect y="7" width="30" height="27" rx="4" fill="#174f8c" /><rect x="9" y="13" width="5.5" height="5.5" fill="#e6532d" /><rect x="15.5" y="13" width="5.5" height="5.5" fill="#7fba00" /><rect x="9" y="19.5" width="5.5" height="5.5" fill="#0da5e0" /><rect x="15.5" y="19.5" width="5.5" height="5.5" fill="#ffb900" /></svg></TaskSlot>
          <TaskSlot><svg width="30" height="32" viewBox="0 0 30 32"><rect width="30" height="32" fill="#141c21" /><text x="10" y="23" textAnchor="middle" fontFamily="Roboto" fontWeight="900" fontSize="18" fill="#fff">H</text><rect x="18" y="9" width="7" height="15" fill="#1fe07d" /></svg></TaskSlot>
          <TaskSlot $active><svg width="30" height="32" viewBox="0 0 30 32"><rect width="30" height="32" fill="#1c8c9a" /><rect x="17" width="13" height="32" fill="#e3a40f" /><rect x="25" width="5" height="32" fill="#2b4a4f" /><rect x="9" y="12" width="11" height="20" fill="#f2cb3c" /><rect x="2" y="19" width="9" height="13" fill="#f7e08c" /></svg><RunDot $wide /></TaskSlot>
          <TaskSlot><FaWhatsapp size={32} color="#1c8f55" /><WaBadge>19</WaBadge><RunDot /></TaskSlot>
          <TaskSlot><svg width="30" height="30" viewBox="0 0 24 24" fill="#0a7bd6"><path d="M23.15 2.587L18.21.21a1.494 1.494 0 0 0-1.705.29l-9.46 8.63-4.12-3.128a.999.999 0 0 0-1.276.057L.327 7.261A1 1 0 0 0 .326 8.74L3.899 12 .326 15.26a1 1 0 0 0 .001 1.479L1.65 17.94a.999.999 0 0 0 1.276.057l4.12-3.128 9.46 8.63a1.492 1.492 0 0 0 1.704.29l4.942-2.377A1.5 1.5 0 0 0 24 20.06V3.939a1.5 1.5 0 0 0-.85-1.352zm-5.146 14.861L10.826 12l7.178-5.448v10.896z" /></svg><RunDot /></TaskSlot>
        </TaskIcons>
        <Tray>
          <TrayBox $w={58}><ChevronUp size={22} strokeWidth={1.6} /></TrayBox>
          <TrayBox $w={22}><svg width="22" height="14" viewBox="0 0 22 14"><path d="M5 13a4 4 0 0 1-1-8 6 6 0 0 1 11-1 5 5 0 0 1 2 9z" fill="#a19f9d" stroke="#252423" strokeWidth="1.2" /></svg></TrayBox>
          <TrayBox $w={74}><LangBlock>ENG<br />IN</LangBlock></TrayBox>
          <TrayBox $w={20}><Wifi size={20} strokeWidth={1.5} /></TrayBox>
          <TrayBox $w={38}><VolumeX size={20} strokeWidth={1.2} /></TrayBox>
          <TrayBox $w={24}><svg width="22" height="14" viewBox="0 0 22 14" fill="none"><rect x="1" y="1" width="17" height="12" rx="3" stroke="#252423" strokeWidth="1.2" /><rect x="3.5" y="3.5" width="10" height="7" fill="#252423" /><rect x="19" y="5" width="2.5" height="4" fill="#252423" /></svg></TrayBox>
          <Clock>14:31<br />22-07-2024</Clock>
          <TrayBox $w={40}><Bell size={20} fill="#15505f" color="#15505f" /></TrayBox>
          <TrayBox $w={49}>
            <svg width="30" height="30" viewBox="0 0 30 30">
              <defs>
                <linearGradient id="cpA" x1="0" y1="1" x2="1" y2="0"><stop offset="0" stopColor="#f2c43a" /><stop offset=".55" stopColor="#62c25a" /><stop offset="1" stopColor="#2396e8" /></linearGradient>
                <linearGradient id="cpB" x1="0" y1="0" x2="1" y2="1"><stop offset="0" stopColor="#2f6fe8" /><stop offset="1" stopColor="#e25fc8" /></linearGradient>
              </defs>
              <path d="M8 2h8l-5 21H5c-4 0-5-5-4-9C2 8 4 2 8 2z" fill="url(#cpA)" />
              <path d="M14 2h7c3 0 5 5 7 11 2 6-2 10-6 10h-9l2-8c2-2 1-9-1-13z" fill="url(#cpB)" />
              <rect x="8" y="20" width="22" height="10" rx="2" fill="#fdc500" />
              <text x="19" y="28" textAnchor="middle" fontFamily="Roboto" fontWeight="700" fontSize="8" fill="#252423">PRE</text>
            </svg>
          </TrayBox>
          <TrayEnd />
        </Tray>
      </Taskbar>
    </Shell>
  );
}
